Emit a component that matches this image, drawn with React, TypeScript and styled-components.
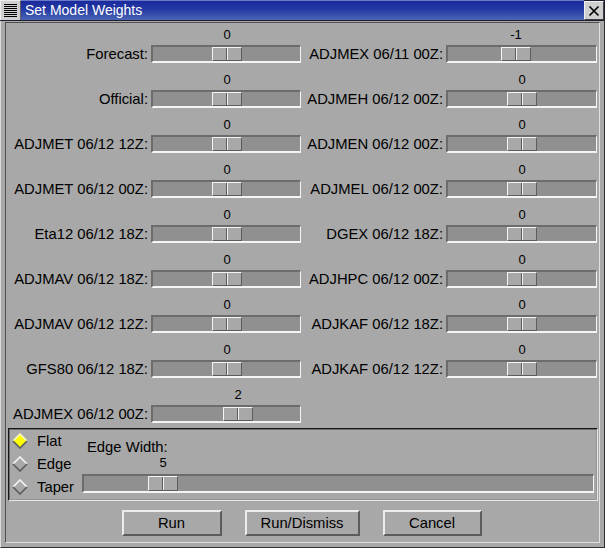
import { Fragment } from "react";
import styled, { createGlobalStyle } from "styled-components";

const GlobalStyle = createGlobalStyle`
  html, body {
    margin: 0;
    padding: 0;
    background: #a8a8a8;
  }
  * {
    box-sizing: border-box;
  }
`;

const Window = styled.div`
  width: 605px;
  height: 548px;
  display: flex;
  flex-direction: column;
  background: #a8a8a8;
  font-family: "Liberation Sans", Arial, sans-serif;
  color: #000;
  overflow: hidden;
`;

const TitleBar = styled.div`
  height: 21px;
  display: flex;
  align-items: stretch;
  background: #1e1e2e;
  padding-bottom: 1px;
`;

const MenuButton = styled.div`
  width: 21px;
  background: #cfcfcf;
  border-top: 1px solid #ececec;
  border-left: 1px solid #ececec;
  border-right: 1px solid #606060;
  display: flex;
  flex-direction: column;
  justify-content: center;
  gap: 1px;
  padding: 0 3px;
`;

const MenuLine = styled.div`
  height: 1px;
  background: #000;
`;

const TitleText = styled.div`
  flex: 1;
  background: linear-gradient(to bottom, #1a2a9c 0%, #243aa4 45%, #4a66b6 100%);
  border-top: 1px solid #6a7ac8;
  color: #fff;
  font-size: 14px;
  line-height: 19px;
  padding-left: 4px;
`;

const CloseButton = styled.div`
  width: 20px;
  background: #cfcfcf;
  border: 1px solid;
  border-color: #f0f0f0 #404040 #404040 #f0f0f0;
  margin: 1px 1px 0 0;
  display: flex;
  align-items: center;
  justify-content: center;
`;

const Frame = styled.div`
  flex: 1;
  display: flex;
  border-left: 1px solid #dcdcdc;
  border-right: 1px solid #303030;
  border-bottom: 1px solid #303030;
  padding: 1px 4px 4px 4px;
`;

const Inner = styled.div`
  flex: 1;
  display: flex;
  flex-direction: column;
  border: 1px solid;
  border-color: #505050 #e0e0e0 #e0e0e0 #505050;
  padding: 5px 0 0 2px;
`;

const WeightGrid = styled.div`
  display: grid;
  grid-template-columns: 143px 150px 145px 151px;
  row-gap: 10px;
  align-items: end;
`;

const RowLabel = styled.div`
  height: 18px;
  line-height: 18px;
  font-size: 14.8px;
  text-align: right;
  padding-right: 3px;
  white-space: nowrap;
`;

const SliderCell = styled.div`
  display: flex;
  flex-direction: column;
`;

const ValueText = styled.div`
  width: 30px;
  height: 14px;
  line-height: 13px;
  margin-bottom: 3px;
  font-size: 13px;
  text-align: center;
`;

const Trough = styled.div<{ $h: number }>`
  height: ${(p) => p.$h}px;
  display: flex;
  align-items: stretch;
  background: #909090;
  border-style: solid;
  border-width: 2px 1px 2px 2px;
  border-color: #6c6c6c #f4f4f4 #f4f4f4 #6c6c6c;
`;

const Thumb = styled.div`
  width: 30px;
  display: flex;
  background: #a8a8a8;
  border: 1px solid;
  border-color: #f4f4f4 #5c5c5c #5c5c5c #f4f4f4;
`;

const ThumbHalf = styled.div<{ $left?: boolean }>`
  flex: 1;
  border-right: ${(p) => (p.$left ? "1px solid #5c5c5c" : "none")};
  border-left: ${(p) => (p.$left ? "none" : "1px solid #f0f0f0")};
`;

const Panel = styled.div`
  margin: 5px 0 0 0;
  width: 590px;
  height: 73px;
  display: flex;
  border-width: 2px;
  border-style: groove;
  border-color: #6c6c6c #e8e8e8 #e8e8e8 #6c6c6c;
`;

const RadioColumn = styled.div`
  width: 72px;
  display: flex;
  flex-direction: column;
  justify-content: center;
  padding-left: 2px;
  padding-bottom: 1px;
`;

const RadioItem = styled.div`
  height: 24px;
  display: flex;
  align-items: center;
  gap: 9px;
  font-size: 14.8px;
`;

const EdgeBlock = styled.div`
  flex: 1;
  display: flex;
  flex-direction: column;
  padding: 9px 2px 0 0;
`;

const EdgeLabel = styled.div`
  height: 16px;
  line-height: 16px;
  font-size: 14.8px;
  padding-left: 5px;
`;

const EdgeValue = styled(ValueText)`
  height: 16px;
  line-height: 16px;
  margin-bottom: 3px;
`;

const ButtonRow = styled.div`
  display: flex;
  justify-content: center;
  gap: 23px;
  margin-top: 9px;
  padding-right: 4px;
`;

const Button = styled.button<{ $w: number }>`
  width: ${(p) => p.$w}px;
  height: 26px;
  padding: 0;
  background: #a8a8a8;
  border: 2px solid;
  border-color: #ececec #5c5c5c #5c5c5c #ececec;
  font-family: "Liberation Sans", Arial, sans-serif;
  font-size: 14.8px;
  color: #000;
`;

type SliderProps = {
  value: number;
  min: number;
  max: number;
  width: number;
  height: number;
  Value: typeof ValueText;
};

function Slider({ value, min, max, width, height, Value }: SliderProps) {
  const inner = width - 3;
  const travel = inner - 30;
  const offset = Math.round(((value - min) / (max - min)) * travel);
  return (
    <SliderCell style={{ width }}>
      <Value style={{ marginLeft: offset + 2 }}>{value}</Value>
      <Trough $h={height}>
        <Thumb style={{ marginLeft: offset }}>
          <ThumbHalf $left />
          <ThumbHalf />
        </Thumb>
      </Trough>
    </SliderCell>
  );
}

function Diamond({ on }: { on: boolean }) {
  return (
    <svg width="16" height="16" viewBox="0 0 16 16">
      <polygon points="8,1 15,8 8,15 1,8" fill={on ? "#ffff00" : "#a8a8a8"} />
      <polyline points="1,8 8,1 15,8" fill="none" stroke={on ? "#f8f8c0" : "#f4f4f4"} strokeWidth="1.6" />
      <polyline points="1,8 8,15 15,8" fill="none" stroke="#5c5c5c" strokeWidth="1.6" />
    </svg>
  );
}

const weights: [string, number][] = [
  ["Forecast:", 0],
  ["ADJMEX 06/11 00Z:", -1],
  ["Official:", 0],
  ["ADJMEH 06/12 00Z:", 0],
  ["ADJMET 06/12 12Z:", 0],
  ["ADJMEN 06/12 00Z:", 0],
  ["ADJMET 06/12 00Z:", 0],
  ["ADJMEL 06/12 00Z:", 0],
  ["Eta12 06/12 18Z:", 0],
  ["DGEX 06/12 18Z:", 0],
  ["ADJMAV 06/12 18Z:", 0],
  ["ADJHPC 06/12 00Z:", 0],
  ["ADJMAV 06/12 12Z:", 0],
  ["ADJKAF 06/12 18Z:", 0],
  ["GFS80 06/12 18Z:", 0],
  ["ADJKAF 06/12 12Z:", 0],
  ["ADJMEX 06/12 00Z:", 2],
];

const modes = ["Flat", "Edge", "Taper"];

export default function App() {
  return (
    <>
      <GlobalStyle />
      <Window>
        <TitleBar>
          <MenuButton>
            {Array.from({ length: 7 }).map((_, i) => (
              <MenuLine key={i} />
            ))}
          </MenuButton>
          <TitleText>Set Model Weights</TitleText>
          <CloseButton>
            <svg width="12" height="12" viewBox="0 0 12 12">
              <path d="M1.5 1.5 L10.5 10.5 M10.5 1.5 L1.5 10.5" stroke="#000" strokeWidth="1.6" />
            </svg>
          </CloseButton>
        </TitleBar>
        <Frame>
          <Inner>
            <WeightGrid>
              {weights.map(([name, v], i) => (
                <Fragment key={name + i}>
                  <RowLabel>{name}</RowLabel>
                  <Slider
                    value={v}
                    min={-10}
                    max={10}
                    width={i % 2 === 0 ? 150 : 151}
                    height={18}
                    Value={ValueText}
                  />
                </Fragment>
              ))}
            </WeightGrid>
            <Panel>
              <RadioColumn>
                {modes.map((m, i) => (
                  <RadioItem key={m}>
                    <Diamond on={i === 0} />
                    {m}
                  </RadioItem>
                ))}
              </RadioColumn>
              <EdgeBlock>
                <EdgeLabel>Edge Width:</EdgeLabel>
                <Slider value={5} min={1} max={31} width={512} height={19} Value={EdgeValue} />
              </EdgeBlock>
            </Panel>
            <ButtonRow>
              <Button $w={100}>Run</Button>
              <Button $w={115}>Run/Dismiss</Button>
              <Button $w={99}>Cancel</Button>
            </ButtonRow>
          </Inner>
        </Frame>
      </Window>
    </>
  );
}
